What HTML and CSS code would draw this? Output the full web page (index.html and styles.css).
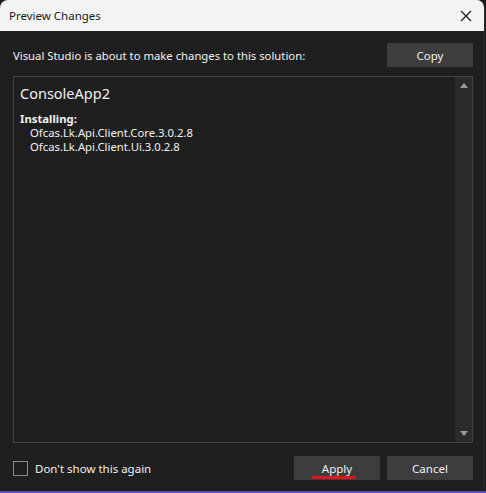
FILE: index.html
```html
<!DOCTYPE html>
<html>
<head>
<meta charset="utf-8">
<link rel="stylesheet" href="styles.css">
</head>
<body>
<div class="dialog">
  <div class="titlebar">
    <span class="title">Preview Changes</span>
    <svg class="close" width="12" height="12" viewBox="0 0 12 12"><path d="M1 1L11 11M11 1L1 11" stroke="#1a1a1a" stroke-width="1.2" fill="none"/></svg>
  </div>
  <div class="body">
    <div class="top">
      <span class="msg">Visual Studio is about to make changes to this solution:</span>
      <button class="btn copy">Copy</button>
    </div>
    <div class="list">
      <div class="content">
        <div class="project">ConsoleApp2</div>
        <div class="section">Installing:</div>
        <div class="item">Ofcas.Lk.Api.Client.Core.3.0.2.8</div>
        <div class="item">Ofcas.Lk.Api.Client.Ui.3.0.2.8</div>
      </div>
      <div class="scrollbar">
        <div class="arrow up"></div>
        <div class="arrow down"></div>
      </div>
    </div>
    <div class="footer">
      <label class="check"><span class="box"></span><span>Don't show this again</span></label>
      <div class="buttons">
        <button class="btn apply"><span class="apply-text">Apply</span><span class="mark"></span></button>
        <button class="btn">Cancel</button>
      </div>
    </div>
  </div>
</div>
<div class="taskbar"></div>
</body>
</html>
```
FILE: styles.css
```css
html, body {
  margin: 0;
  padding: 0;
  background: #1c1c1c;
  width: 486px;
  height: 493px;
  overflow: hidden;
  font-family: "Noto Sans", "Segoe UI", sans-serif;
}
.dialog {
  width: 485px;
  height: 491px;
  background: #1f1f1f;
  border-radius: 8px 8px 0 0;
  overflow: hidden;
  display: flex;
  flex-direction: column;
  border-right: 1px solid #2b2b2b;
  box-sizing: border-box;
}
.titlebar {
  height: 31px;
  background: #f3f3f3;
  display: flex;
  align-items: center;
  justify-content: space-between;
  padding: 0 12px 0 9px;
  flex-shrink: 0;
}
.title {
  font-size: 11.5px;
  color: #1a1a1a;
}
.close { display: block; }
.body {
  flex: 1;
  display: flex;
  flex-direction: column;
  padding: 12px 11px 12px 13px;
}
.top {
  display: flex;
  align-items: center;
  justify-content: space-between;
  height: 24px;
}
.msg {
  color: #f1f1f1;
  font-size: 11.3px;
}
.btn {
  width: 86px;
  height: 24px;
  background: #3d3d3d;
  border: none;
  color: #f1f1f1;
  font-family: inherit;
  font-size: 11.5px;
  padding: 0;
  display: flex;
  align-items: center;
  justify-content: center;
}
.list {
  margin-top: 9px;
  height: 367px;
  border: 1px solid #434343;
  display: flex;
  box-sizing: border-box;
}
.content {
  flex: 1;
  padding: 6px 6px;
  color: #f1f1f1;
}
.project {
  font-size: 14.5px;
  line-height: 20px;
}
.section {
  font-size: 11.3px;
  font-weight: bold;
  margin-top: 9px;
  line-height: 14px;
}
.item {
  font-size: 11.3px;
  line-height: 14px;
  padding-left: 10px;
}
.scrollbar {
  width: 17px;
  background: #2b2b2b;
  display: flex;
  flex-direction: column;
  justify-content: space-between;
}
.arrow {
  height: 17px;
  display: flex;
  align-items: center;
  justify-content: center;
  background: #2b2b2b;
}
.arrow::after {
  content: "";
  width: 0;
  height: 0;
  border-left: 4px solid transparent;
  border-right: 4px solid transparent;
}
.up::after { border-bottom: 5px solid #999; }
.down::after { border-top: 5px solid #999; }
.footer {
  margin-top: 13px;
  display: flex;
  align-items: center;
  justify-content: space-between;
}
.check {
  display: flex;
  align-items: center;
  gap: 7px;
  color: #f1f1f1;
  font-size: 11.5px;
}
.box {
  width: 13px;
  height: 13px;
  border: 1px solid #8a8a8a;
}
.buttons {
  display: flex;
  gap: 7px;
}
.apply {
  position: relative;
}
.mark {
  position: absolute;
  left: 18px;
  bottom: 1px;
  width: 44px;
  height: 3px;
  border-radius: 2px;
  background: #e3141b;
}
.taskbar {
  height: 2px;
  background: #5a4fb0;
}
```
